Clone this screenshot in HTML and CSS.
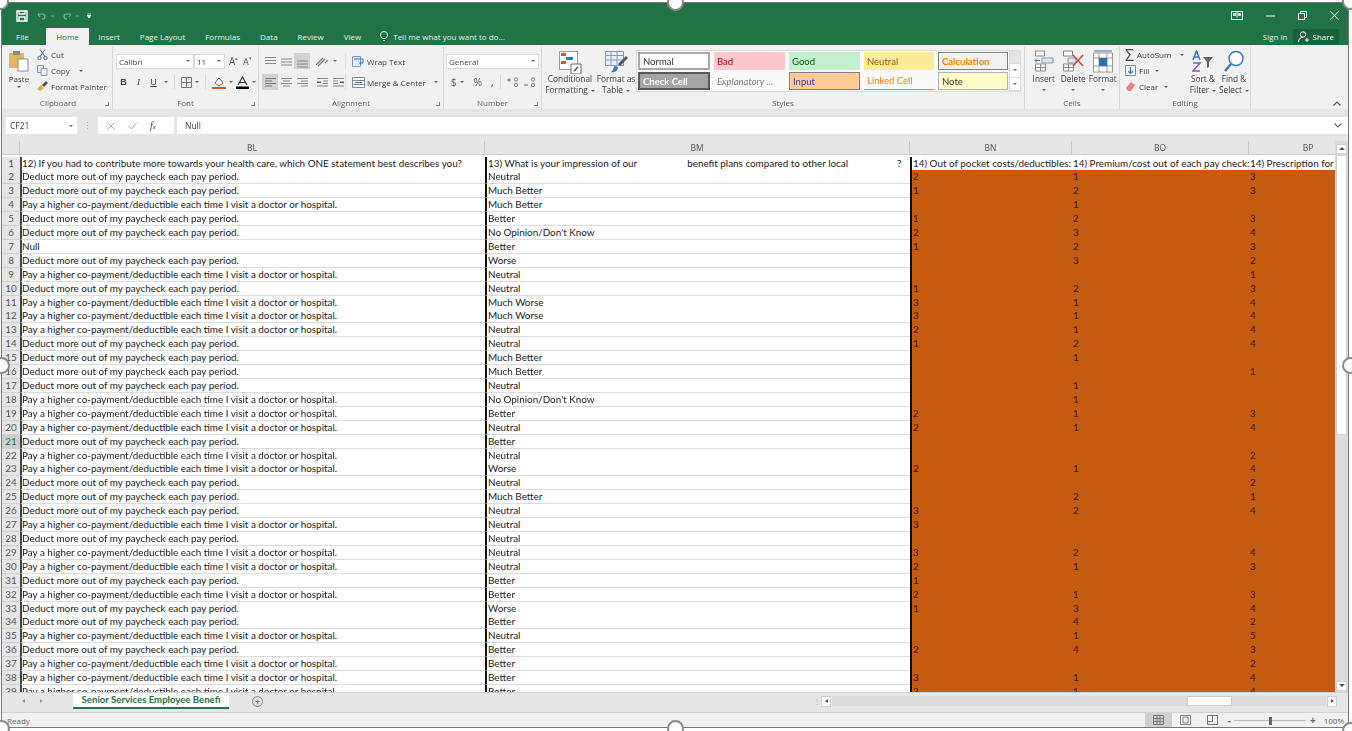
FILE: index.html
```html
<!DOCTYPE html>
<html lang="en">

<head>
    <meta charset="UTF-8">
    <title>Senior Services Employee Benefits - Excel</title>
    <link rel="stylesheet" href="styles.css">
</head>

<body>

    <div class="frame">
        <div class="window">

            <!-- Title bar -->
            <div class="titlebar">
                <div class="qat">
                    <svg class="ic-save" width="12" height="12" viewBox="0 0 12 12"><path d="M1 1h10v10H1z M3 1v3h6V1 M3 11V7h6v4" fill="none" stroke="#fff" stroke-width="1.4"/></svg>
                    <svg class="ic-undo" width="22" height="10" viewBox="0 0 22 10"><path d="M2 3l2 3M2 3h4c4 0 4 5 0 5" fill="none" stroke="#7fae93" stroke-width="1.2"/><path d="M15 5h3" stroke="#7fae93"/></svg>
                    <svg class="ic-redo" width="22" height="10" viewBox="0 0 22 10"><path d="M10 3L8 6M10 3H6c-4 0-4 5 0 5" fill="none" stroke="#7fae93" stroke-width="1.2"/><path d="M15 5h3" stroke="#7fae93"/></svg>
                    <svg class="ic-more" width="6" height="6" viewBox="0 0 6 6"><path d="M1 0h4M1 2h4l-2 3z" stroke="#fff" fill="#fff" stroke-width=".7"/></svg>
                </div>
                <div class="winbtns">
                    <svg width="12" height="9" viewBox="0 0 12 9"><path d="M.5.5h11v8H.5z M6 .5v6" fill="none" stroke="#fff"/><path d="M2 2h3v3H2zM7 2h3v3H7z" fill="#cfe3d7"/></svg>
                    <svg width="9" height="9" viewBox="0 0 9 9"><path d="M0 5h9" stroke="#fff"/></svg>
                    <svg width="9" height="9" viewBox="0 0 9 9"><path d="M.5 2.5h6v6h-6z M2.5 2V.5h6v6H7" fill="none" stroke="#fff"/></svg>
                    <svg width="9" height="9" viewBox="0 0 9 9"><path d="M.5.5l8 8M8.5.5l-8 8" stroke="#fff"/></svg>
                </div>
            </div>

            <div class="tabs">
                <span class="tab tab-file">File</span>
                <span class="tab tab-active">Home</span>
                <span class="tab">Insert</span>
                <span class="tab">Page Layout</span>
                <span class="tab">Formulas</span>
                <span class="tab">Data</span>
                <span class="tab">Review</span>
                <span class="tab">View</span>
                <span class="tell-me">
                    <svg width="8" height="11" viewBox="0 0 8 11"><path d="M2.5 7.5C1 6.5.5 5.3.5 4a3.5 3.5 0 0 1 7 0c0 1.3-.5 2.5-2 3.5zM3 9.5h2" fill="none" stroke="#fff" stroke-width=".9"/></svg>
                    Tell me what you want to do...
                </span>
                <span class="sign-in">Sign in</span>
                <span class="share">
                    <svg width="11" height="11" viewBox="0 0 11 11"><circle cx="5" cy="3.5" r="2.7" fill="none" stroke="#fff"/><path d="M.5 11c0-3 2-4.8 4.500-4.800M7 9h4M9 7v4" fill="none" stroke="#fff"/></svg>
                    Share
                </span>
            </div>

            <!-- Ribbon -->
            <div class="ribbon">

                <div class="group group-clipboard">
                    <div class="group-body">
                        <div class="paste">
                            <svg width="22" height="22" viewBox="0 0 22 22"><path d="M1 3h15v15H1z" fill="#e3b565"/><path d="M5 1h7v4H5z" fill="#8c8c8c"/><path d="M10 9h10v12H10z" fill="#fff" stroke="#8a8a8a"/></svg>
                            <span>Paste</span>
                            <i class="caret"></i>
                        </div>
                        <div class="clip-list">
                            <span class="clip-item"><svg width="11" height="11" viewBox="0 0 11 11"><circle cx="2.500" cy="9" r="1.700" fill="none" stroke="#4a6fa0"/><circle cx="8.500" cy="9" r="1.700" fill="none" stroke="#4a6fa0"/><path d="M3 7.500L8 .5M8 7.500L3 .5" stroke="#555"/></svg>Cut</span>
                            <span class="clip-item"><svg width="11" height="11" viewBox="0 0 11 11"><path d="M.5.5h6v7h-6z" fill="#dfe6ee" stroke="#8a9bb0"/><path d="M4 3.500h6v7H4z" fill="#eef2f6" stroke="#8a9bb0"/></svg>Copy <i class="caret caret-gap"></i></span>
                            <span class="clip-item"><svg width="11" height="11" viewBox="0 0 11 11"><path d="M0 8l4-4 3 3-4 3z" fill="#e3a93c"/><path d="M5 4l4-4 2 2-4 4z" fill="#555"/></svg>Format Painter</span>
                        </div>
                    </div>
                    <div class="group-label">Clipboard<i class="launcher"></i></div>
                </div>

                <div class="group group-font">
                    <div class="group-body stack">
                        <div class="tool-row">
                            <span class="combo combo-font">Calibri<i class="caret"></i></span>
                            <span class="combo combo-size">11<i class="caret"></i></span>
                            <span class="glyph glyph-grow">A<sup>▴</sup></span>
                            <span class="glyph glyph-shrink">A<sup>▾</sup></span>
                        </div>
                        <div class="tool-row row-format">
                            <b class="fmt">B</b>
                            <i class="fmt fmt-italic">I</i>
                            <u class="fmt">U</u><i class="caret"></i>
                            <span class="vsep"></span>
                            <svg width="11" height="11" viewBox="0 0 11 11"><path d="M.5.5h10v10H.5zM5.500.5v10M.5 5.500h10" fill="none" stroke="#777"/></svg><i class="caret"></i>
                            <span class="vsep"></span>
                            <svg width="14" height="13" viewBox="0 0 14 13"><path d="M3 7l4-5 4 5-4 3z" fill="#fff" stroke="#666"/><path d="M0 11h14v2H0z" fill="#d2571d"/></svg><i class="caret"></i>
                            <svg class="font-color" width="13" height="13" viewBox="0 0 13 13"><path d="M2 9L6.500 1 11 9M4 6.500h5" fill="none" stroke="#333" stroke-width="1.200"/><path d="M0 10.500h13V13H0z" fill="#000"/></svg><i class="caret"></i>
                        </div>
                    </div>
                    <div class="group-label">Font<i class="launcher"></i></div>
                </div>

                <div class="group group-align">
                    <div class="group-body stack">
                        <div class="tool-row">
                            <span class="al"><svg width="11" height="9" viewBox="0 0 11 9"><path d="M0 .5h11M0 3.500h11M0 6.500h11" stroke="#888"/></svg></span>
                            <span class="al"><svg width="11" height="9" viewBox="0 0 11 9"><path d="M0 2h11M0 5h11M0 8h11" stroke="#888"/></svg></span>
                            <span class="al al-on"><svg width="11" height="13" viewBox="0 0 11 13"><path d="M0 6h11M0 9h11M0 12h11" stroke="#888"/></svg></span>
                            <span class="al orient"><svg width="15" height="11" viewBox="0 0 15 11"><path d="M1 9l7-7M3 10l7-7M10 7l3-3" stroke="#777" stroke-width="1.200"/></svg><i class="caret"></i></span>
                            <span class="wrap-text"><svg width="13" height="11" viewBox="0 0 13 11"><path d="M.5.5h8v10h-8z" fill="#dfe9f3" stroke="#7f9bbc"/><path d="M2 3h9v4H8M9 5.500L7.500 7 9 8.500" fill="none" stroke="#3d7ab8"/></svg>Wrap Text</span>
                        </div>
                        <div class="tool-row">
                            <span class="al al-on"><svg width="11" height="9" viewBox="0 0 11 9"><path d="M0 .5h11M0 3h7M0 5.500h11M0 8h7" stroke="#777"/></svg></span>
                            <span class="al"><svg width="11" height="9" viewBox="0 0 11 9"><path d="M0 .5h11M2 3h7M0 5.500h11M2 8h7" stroke="#888"/></svg></span>
                            <span class="al"><svg width="11" height="9" viewBox="0 0 11 9"><path d="M0 .5h11M4 3h7M0 5.500h11M4 8h7" stroke="#888"/></svg></span>
                            <span class="al al-indent"><svg width="11" height="9" viewBox="0 0 11 9"><path d="M0 .5h11M6 3h5M6 5.500h5M0 8h11" stroke="#888"/><path d="M0 4.300h4" stroke="#2f6fb3" stroke-width="1.600"/></svg></span>
                            <span class="al"><svg width="11" height="9" viewBox="0 0 11 9"><path d="M0 .5h11M0 3h5M0 5.500h5M0 8h11" stroke="#888"/><path d="M7 4.300h4" stroke="#2f6fb3" stroke-width="1.600"/></svg></span>
                            <span class="wrap-text merge"><svg width="13" height="11" viewBox="0 0 13 11"><path d="M.5.5h12v10H.5zM.5 3.500h12M.5 7.500h12" fill="#fff" stroke="#7f8a96"/><path d="M3 5.500h7" stroke="#3d7ab8"/></svg>Merge &amp; Center <i class="caret caret-gap"></i></span>
                        </div>
                    </div>
                    <div class="group-label">Alignment<i class="launcher"></i></div>
                </div>

                <div class="group group-number">
                    <div class="group-body stack">
                        <div class="tool-row">
                            <span class="combo combo-number">General<i class="caret"></i></span>
                        </div>
                        <div class="tool-row row-number">
                            <span class="num-sym">$</span><i class="caret"></i>
                            <span class="num-sym num-pct">%</span>
                            <span class="num-sym num-comma">,</span>
                            <span class="vsep"></span>
                            <svg width="13" height="11" viewBox="0 0 13 11"><path d="M0 3h4M2 1v4" stroke="#3d7ab8"/><circle cx="9" cy="2.500" r="1.700" fill="none" stroke="#888"/><circle cx="9" cy="8" r="1.700" fill="none" stroke="#888"/></svg>
                            <svg class="gap-l" width="13" height="11" viewBox="0 0 13 11"><path d="M0 8h4" stroke="#3d7ab8"/><circle cx="9" cy="2.500" r="1.700" fill="none" stroke="#888"/><circle cx="9" cy="8" r="1.700" fill="none" stroke="#888"/></svg>
                        </div>
                    </div>
                    <div class="group-label">Number<i class="launcher"></i></div>
                </div>

                <div class="group group-styles">
                    <div class="group-body">
                        <div class="big-btn btn-cond">
                            <svg width="24" height="24" viewBox="0 0 24 24"><path d="M1.500 1.500h18v18h-18z" fill="#fff" stroke="#9a9a9a"/><path d="M3 3h5v3H3zM3 11h5v3H3z" fill="#d2571d"/><path d="M8 7h7v3H8z" fill="#2f78c4"/><path d="M13 14h10v10H13z" fill="#fff" stroke="#666"/><path d="M16 21l4-4" stroke="#444" stroke-width="1.500"/></svg>
                            <span>Conditional<br>Formatting<i class="caret"></i></span>
                        </div>
                        <div class="big-btn btn-table">
                            <svg width="24" height="24" viewBox="0 0 24 24"><path d="M1.500 1.500h18v14h-18zM1.500 5.500h18M1.500 10h18M7 1.500v14M13 1.500v14" fill="#e8eff6" stroke="#8a9bb0"/><path d="M22 6l2 2-8 8-2-2z" fill="#555"/><path d="M7 22c3 1 7-1 7-5l-3-1c-2 1-1 4-4 6z" fill="#2f78c4"/></svg>
                            <span>Format as<br>Table<i class="caret"></i></span>
                        </div>
                        <div class="gallery">
                            <div class="style-grid">
                                <span class="sc sc-normal">Normal</span>
                                <span class="sc sc-bad">Bad</span>
                                <span class="sc sc-good">Good</span>
                                <span class="sc sc-neutral">Neutral</span>
                                <span class="sc sc-calc">Calculation</span>
                                <span class="sc sc-check">Check Cell</span>
                                <span class="sc sc-expl">Explanatory ...</span>
                                <span class="sc sc-input">Input</span>
                                <span class="sc sc-linked">Linked Cell</span>
                                <span class="sc sc-note">Note</span>
                            </div>
                            <div class="gallery-scroll">
                                <span class="gs gs-off"></span>
                                <span class="gs"><i class="caret"></i></span>
                                <span class="gs"><i class="caret"></i></span>
                            </div>
                        </div>
                    </div>
                    <div class="group-label">Styles</div>
                </div>

                <div class="group group-cells">
                    <div class="group-body">
                        <div class="big-btn btn-cell">
                            <svg width="20" height="24" viewBox="0 0 20 24"><path d="M1.500 1h9v5h-9zM1.500 14h10v7h-10zM6.500 14v7M1.500 17.500h10" fill="#fff" stroke="#888"/><path d="M8 8h11v5H8z" fill="#dfe6ee" stroke="#8a9bb0"/><path d="M1 10.500h5M3 8.500l-2 2 2 2" fill="none" stroke="#2f78c4"/></svg>
                            <span>Insert</span><i class="caret"></i>
                        </div>
                        <div class="big-btn btn-cell">
                            <svg width="22" height="24" viewBox="0 0 22 24"><path d="M1.500 1h9v5h-9zM1.500 14h10v7h-10zM6.500 14v7M1.500 17.500h10" fill="#fff" stroke="#888"/><path d="M6 8h8v5H6z" fill="#dfe6ee" stroke="#8a9bb0"/><path d="M11 5l10 11M21 5L11 16" stroke="#d2473a" stroke-width="1.600"/></svg>
                            <span>Delete</span><i class="caret"></i>
                        </div>
                        <div class="big-btn btn-cell">
                            <svg width="22" height="24" viewBox="0 0 22 24"><path d="M1.500 3h19v19h-19zM1.500 8h19M7 3v19M15 3v19M1.500 16h19" fill="#fff" stroke="#999"/><path d="M7 8h8v8H7z" fill="#2f6fa8"/><path d="M2 1h18" stroke="#2f78c4"/></svg>
                            <span>Format</span><i class="caret"></i>
                        </div>
                    </div>
                    <div class="group-label">Cells</div>
                </div>

                <div class="group group-edit">
                    <div class="group-body">
                        <div class="clip-list edit-list">
                            <span class="clip-item"><b class="sigma">Σ</b>AutoSum <i class="caret caret-gap"></i></span>
                            <span class="clip-item"><svg width="11" height="11" viewBox="0 0 11 11"><path d="M.5.5h10v10H.5z" fill="#fff" stroke="#7f8a96"/><path d="M5.500 2v6M3 6l2.500 2.500L8 6" fill="none" stroke="#2f78c4" stroke-width="1.200"/></svg>Fill<i class="caret"></i></span>
                            <span class="clip-item"><svg width="11" height="11" viewBox="0 0 11 11"><path d="M1 7l5-6 4 3-4 6H3z" fill="#e8837e"/></svg>Clear<i class="caret"></i></span>
                        </div>
                        <div class="big-btn btn-sort">
                            <svg width="22" height="24" viewBox="0 0 22 24"><path d="M11 7h10l-4 5v5l-2 1v-6z" fill="#666"/><path d="M1 10L4.500 1 8 10M2.500 7h4" fill="none" stroke="#2f78c4" stroke-width="1.500"/><path d="M1 13h7l-7 8h7" fill="none" stroke="#8e55b8" stroke-width="1.500"/></svg>
                            <span>Sort &amp;<br>Filter<i class="caret"></i></span>
                        </div>
                        <div class="big-btn btn-find">
                            <svg width="22" height="24" viewBox="0 0 22 24"><circle cx="13" cy="8.500" r="7" fill="#fff" stroke="#2f78c4" stroke-width="1.500"/><path d="M8 14l-6 7" stroke="#2f78c4" stroke-width="2.400"/></svg>
                            <span>Find &amp;<br>Select<i class="caret"></i></span>
                        </div>
                    </div>
                    <div class="group-label">Editing</div>
                </div>

                <svg class="collapse" width="8" height="5" viewBox="0 0 8 5"><path d="M.5 4.500L4 1l3.500 3.500" fill="none" stroke="#555" stroke-width="1.100"/></svg>
            </div>

            <!-- Formula bar -->
            <div class="formula-bar">
                <span class="name-box">CF21<i class="caret"></i></span>
                <span class="fb-dots">⋮</span>
                <span class="fb-btns">
                    <svg width="8" height="8" viewBox="0 0 8 8"><path d="M.5.5l7 7M7.500.5l-7 7" stroke="#aaa"/></svg>
                    <svg width="9" height="8" viewBox="0 0 9 8"><path d="M.5 4l3 3 5-6.500" fill="none" stroke="#aaa"/></svg>
                    <em>f<small>x</small></em>
                </span>
                <span class="fb-input">Null</span>
                <svg class="fb-expand" width="8" height="5" viewBox="0 0 8 5"><path d="M.5.5L4 4 7.500.5" fill="none" stroke="#666" stroke-width="1.100"/></svg>
            </div>

            <!-- Sheet -->
            <div class="sheet">
                <div class="sheet-main">
                    <div class="col-head">
                        <span class="corner"></span>
                        <span>BL</span>
                        <span>BM</span>
                        <span>BN</span>
                        <span>BO</span>
                        <span class="head-bp">BP</span>
                    </div>
                    <div class="rows">
                        <div class="row row-top"><span class="rn">1</span><span class="c bl">12) If you had to contribute more towards your health care, which ONE statement best describes you?</span><span class="c bm"><span>13) What is your impression of our</span><span class="q-b">benefit plans compared to other local</span><span class="q-c">?</span></span><span class="c bn">14) Out of pocket costs/deductibles:</span><span class="c">14) Premium/cost out of each pay check:</span><span class="c">14) Prescription for</span></div>
                        <div class="row"><span class="rn">2</span><span class="c bl">Deduct more out of my paycheck each pay period.</span><span class="c bm">Neutral</span><span class="c bn">2</span><span class="c">1</span><span class="c">3</span></div>
                        <div class="row"><span class="rn">3</span><span class="c bl">Deduct more out of my paycheck each pay period.</span><span class="c bm">Much Better</span><span class="c bn">1</span><span class="c">2</span><span class="c">3</span></div>
                        <div class="row"><span class="rn">4</span><span class="c bl">Pay a higher co-payment/deductible each time I visit a doctor or hospital.</span><span class="c bm">Much Better</span><span class="c bn"></span><span class="c">1</span><span class="c"></span></div>
                        <div class="row"><span class="rn">5</span><span class="c bl">Deduct more out of my paycheck each pay period.</span><span class="c bm">Better</span><span class="c bn">1</span><span class="c">2</span><span class="c">3</span></div>
                        <div class="row"><span class="rn">6</span><span class="c bl">Deduct more out of my paycheck each pay period.</span><span class="c bm">No Opinion/Don't Know</span><span class="c bn">2</span><span class="c">3</span><span class="c">4</span></div>
                        <div class="row"><span class="rn">7</span><span class="c bl">Null</span><span class="c bm">Better</span><span class="c bn">1</span><span class="c">2</span><span class="c">3</span></div>
                        <div class="row"><span class="rn">8</span><span class="c bl">Deduct more out of my paycheck each pay period.</span><span class="c bm">Worse</span><span class="c bn"></span><span class="c">3</span><span class="c">2</span></div>
                        <div class="row"><span class="rn">9</span><span class="c bl">Pay a higher co-payment/deductible each time I visit a doctor or hospital.</span><span class="c bm">Neutral</span><span class="c bn"></span><span class="c"></span><span class="c">1</span></div>
                        <div class="row"><span class="rn">10</span><span class="c bl">Deduct more out of my paycheck each pay period.</span><span class="c bm">Neutral</span><span class="c bn">1</span><span class="c">2</span><span class="c">3</span></div>
                        <div class="row"><span class="rn">11</span><span class="c bl">Pay a higher co-payment/deductible each time I visit a doctor or hospital.</span><span class="c bm">Much Worse</span><span class="c bn">3</span><span class="c">1</span><span class="c">4</span></div>
                        <div class="row"><span class="rn">12</span><span class="c bl">Pay a higher co-payment/deductible each time I visit a doctor or hospital.</span><span class="c bm">Much Worse</span><span class="c bn">3</span><span class="c">1</span><span class="c">4</span></div>
                        <div class="row"><span class="rn">13</span><span class="c bl">Pay a higher co-payment/deductible each time I visit a doctor or hospital.</span><span class="c bm">Neutral</span><span class="c bn">2</span><span class="c">1</span><span class="c">4</span></div>
                        <div class="row"><span class="rn">14</span><span class="c bl">Deduct more out of my paycheck each pay period.</span><span class="c bm">Neutral</span><span class="c bn">1</span><span class="c">2</span><span class="c">4</span></div>
                        <div class="row"><span class="rn">15</span><span class="c bl">Deduct more out of my paycheck each pay period.</span><span class="c bm">Much Better</span><span class="c bn"></span><span class="c">1</span><span class="c"></span></div>
                        <div class="row"><span class="rn">16</span><span class="c bl">Deduct more out of my paycheck each pay period.</span><span class="c bm">Much Better</span><span class="c bn"></span><span class="c"></span><span class="c">1</span></div>
                        <div class="row"><span class="rn">17</span><span class="c bl">Deduct more out of my paycheck each pay period.</span><span class="c bm">Neutral</span><span class="c bn"></span><span class="c">1</span><span class="c"></span></div>
                        <div class="row"><span class="rn">18</span><span class="c bl">Pay a higher co-payment/deductible each time I visit a doctor or hospital.</span><span class="c bm">No Opinion/Don't Know</span><span class="c bn"></span><span class="c">1</span><span class="c"></span></div>
                        <div class="row"><span class="rn">19</span><span class="c bl">Pay a higher co-payment/deductible each time I visit a doctor or hospital.</span><span class="c bm">Better</span><span class="c bn">2</span><span class="c">1</span><span class="c">3</span></div>
                        <div class="row"><span class="rn">20</span><span class="c bl">Pay a higher co-payment/deductible each time I visit a doctor or hospital.</span><span class="c bm">Neutral</span><span class="c bn">2</span><span class="c">1</span><span class="c">4</span></div>
                        <div class="row row-sel"><span class="rn">21</span><span class="c bl">Deduct more out of my paycheck each pay period.</span><span class="c bm">Better</span><span class="c bn"></span><span class="c"></span><span class="c"></span></div>
                        <div class="row"><span class="rn">22</span><span class="c bl">Pay a higher co-payment/deductible each time I visit a doctor or hospital.</span><span class="c bm">Neutral</span><span class="c bn"></span><span class="c"></span><span class="c">2</span></div>
                        <div class="row"><span class="rn">23</span><span class="c bl">Pay a higher co-payment/deductible each time I visit a doctor or hospital.</span><span class="c bm">Worse</span><span class="c bn">2</span><span class="c">1</span><span class="c">4</span></div>
                        <div class="row"><span class="rn">24</span><span class="c bl">Deduct more out of my paycheck each pay period.</span><span class="c bm">Neutral</span><span class="c bn"></span><span class="c"></span><span class="c">2</span></div>
                        <div class="row"><span class="rn">25</span><span class="c bl">Deduct more out of my paycheck each pay period.</span><span class="c bm">Much Better</span><span class="c bn"></span><span class="c">2</span><span class="c">1</span></div>
                        <div class="row"><span class="rn">26</span><span class="c bl">Deduct more out of my paycheck each pay period.</span><span class="c bm">Neutral</span><span class="c bn">3</span><span class="c">2</span><span class="c">4</span></div>
                        <div class="row"><span class="rn">27</span><span class="c bl">Pay a higher co-payment/deductible each time I visit a doctor or hospital.</span><span class="c bm">Neutral</span><span class="c bn">3</span><span class="c"></span><span class="c"></span></div>
                        <div class="row"><span class="rn">28</span><span class="c bl">Deduct more out of my paycheck each pay period.</span><span class="c bm">Neutral</span><span class="c bn"></span><span class="c"></span><span class="c"></span></div>
                        <div class="row"><span class="rn">29</span><span class="c bl">Pay a higher co-payment/deductible each time I visit a doctor or hospital.</span><span class="c bm">Neutral</span><span class="c bn">3</span><span class="c">2</span><span class="c">4</span></div>
                        <div class="row"><span class="rn">30</span><span class="c bl">Pay a higher co-payment/deductible each time I visit a doctor or hospital.</span><span class="c bm">Neutral</span><span class="c bn">2</span><span class="c">1</span><span class="c">3</span></div>
                        <div class="row"><span class="rn">31</span><span class="c bl">Deduct more out of my paycheck each pay period.</span><span class="c bm">Better</span><span class="c bn">1</span><span class="c"></span><span class="c"></span></div>
                        <div class="row"><span class="rn">32</span><span class="c bl">Pay a higher co-payment/deductible each time I visit a doctor or hospital.</span><span class="c bm">Better</span><span class="c bn">2</span><span class="c">1</span><span class="c">3</span></div>
                        <div class="row"><span class="rn">33</span><span class="c bl">Deduct more out of my paycheck each pay period.</span><span class="c bm">Worse</span><span class="c bn">1</span><span class="c">3</span><span class="c">4</span></div>
                        <div class="row"><span class="rn">34</span><span class="c bl">Deduct more out of my paycheck each pay period.</span><span class="c bm">Better</span><span class="c bn"></span><span class="c">4</span><span class="c">2</span></div>
                        <div class="row"><span class="rn">35</span><span class="c bl">Pay a higher co-payment/deductible each time I visit a doctor or hospital.</span><span class="c bm">Neutral</span><span class="c bn"></span><span class="c">1</span><span class="c">5</span></div>
                        <div class="row"><span class="rn">36</span><span class="c bl">Deduct more out of my paycheck each pay period.</span><span class="c bm">Better</span><span class="c bn">2</span><span class="c">4</span><span class="c">3</span></div>
                        <div class="row"><span class="rn">37</span><span class="c bl">Pay a higher co-payment/deductible each time I visit a doctor or hospital.</span><span class="c bm">Better</span><span class="c bn"></span><span class="c"></span><span class="c">2</span></div>
                        <div class="row"><span class="rn">38</span><span class="c bl">Pay a higher co-payment/deductible each time I visit a doctor or hospital.</span><span class="c bm">Better</span><span class="c bn">3</span><span class="c">1</span><span class="c">4</span></div>
                        <div class="row"><span class="rn">39</span><span class="c bl">Pay a higher co-payment/deductible each time I visit a doctor or hospital.</span><span class="c bm">Better</span><span class="c bn">3</span><span class="c">1</span><span class="c">4</span></div>
                    </div>
                </div>
                <div class="vscroll">
                    <span class="sb-btn sb-up"></span>
                    <span class="sb-thumb"></span>
                    <span class="sb-btn sb-down"></span>
                </div>
            </div>

            <!-- Sheet tabs -->
            <div class="tabbar">
                <span class="nav-arrows"><i class="arrow-l"></i><i class="arrow-r"></i></span>
                <span class="sheet-tab">Senior Services Employee Benefi</span>
                <span class="add-sheet">+</span>
                <span class="hscroll-dots">⋮</span>
                <span class="hscroll">
                    <span class="hs-btn"><i class="arrow-l"></i></span>
                    <span class="hs-track"><span class="hs-thumb"></span></span>
                    <span class="hs-btn"><i class="arrow-r"></i></span>
                </span>
            </div>

            <!-- Status bar -->
            <div class="statusbar">
                <span class="ready">Ready</span>
                <span class="views">
                    <span class="view view-on"><svg width="11" height="10" viewBox="0 0 11 10"><path d="M.5.5h10v9H.5zM.5 3.500h10M.5 6.500h10M4 .5v9M7 .5v9" fill="none" stroke="#777"/></svg></span>
                    <span class="view"><svg width="11" height="10" viewBox="0 0 11 10"><path d="M.5.5h10v9H.5zM3 2h5v6H3z" fill="none" stroke="#888"/></svg></span>
                    <span class="view"><svg width="11" height="10" viewBox="0 0 11 10"><path d="M.5.5h10v9H.5zM.5 6.500h5v-6" fill="none" stroke="#777"/></svg></span>
                </span>
                <span class="zoom-minus">-</span>
                <span class="slider"><i class="slider-knob"></i></span>
                <span class="zoom-plus">+</span>
                <span class="zoom-pct">100%</span>
            </div>
        </div>

        <!-- Picture selection handles -->
        <span class="handle h-tl"></span>
        <span class="handle h-tc"></span>
        <span class="handle h-tr"></span>
        <span class="handle h-ml"></span>
        <span class="handle h-mr"></span>
        <span class="handle h-bl"></span>
        <span class="handle h-bc"></span>
        <span class="handle h-br"></span>
    </div>

</body>

</html>
```

FILE: styles.css
```css
* {
    box-sizing: border-box;
}

html,
body {
    margin: 0;
    padding: 0;
    height: 731px;
    overflow: hidden;
    background: #fff;
}

body {
    font-family: "Open Sans", "Noto Sans", sans-serif;
    font-size: 8px;
    color: #444;
}

svg {
    display: block;
    flex: none;
}

.frame {
    position: relative;
    width: 1352px;
    height: 731px;
    padding: 3px 4px 4px 2px;
}

.window {
    display: flex;
    flex-direction: column;
    width: 1346px;
    height: 724px;
    background: #e6e6e6;
    box-shadow: 0 0 0 1px #777;
    filter: blur(0.35px);
}

/* caret used all over the ribbon */
.caret {
    display: inline-block;
    flex: none;
    width: 0;
    height: 0;
    margin-left: 3px;
    border-left: 2px solid transparent;
    border-right: 2px solid transparent;
    border-top: 2px solid #666;
    vertical-align: middle;
}

.caret-gap {
    margin-left: 6px;
}

/* Title bar */
.titlebar {
    display: flex;
    justify-content: space-between;
    align-items: center;
    height: 25px;
    flex: none;
    padding: 0 9px 0 14px;
    background: #217346;
}

.qat,
.winbtns {
    display: flex;
    align-items: center;
}

.ic-undo {
    margin-left: 8px;
}

.ic-redo {
    margin-left: 3px;
}

.ic-more {
    margin-left: 3px;
}

.winbtns {
    gap: 23px;
}

.tabs {
    display: flex;
    align-items: center;
    flex: none;
    height: 17px;
    padding-left: 14px;
    color: #e8f1ec;
    background: #217346;
}

.tab {
    margin-right: 20px;
}

.tab-file {
    margin-right: 17px;
}

.tab-active {
    display: flex;
    align-items: center;
    height: 17px;
    margin-right: 9px;
    padding: 0 10.5px;
    color: #217346;
    background: #f1f1f1;
}

.tell-me {
    display: flex;
    align-items: center;
    gap: 5px;
    margin-left: -1px;
}

.sign-in {
    margin-left: auto;
}

.share {
    display: flex;
    align-items: center;
    gap: 4px;
    height: 15px;
    margin: 0 9px 0 5px;
    padding: 0 5px;
    background: #1d5f3b;
    color: #fff;
}

/* Ribbon */
.ribbon {
    position: relative;
    display: flex;
    flex: none;
    height: 64px;
    padding-left: 2px;
    background: #f1f1f1;
}

.group {
    display: flex;
    flex-direction: column;
    flex: none;
    height: 62px;
    margin-top: 2px;
    border-right: 1px solid #d8d8d8;
}

.group-clipboard {
    width: 109px;
}

.group-font {
    width: 146px;
}

.group-align {
    width: 185px;
}

.group-number {
    width: 98px;
}

.group-styles {
    width: 483px;
}

.group-cells {
    width: 95px;
}

.group-edit {
    width: 131px;
}

.group-body {
    display: flex;
    flex: 1;
    min-height: 0;
}

.stack {
    flex-direction: column;
    gap: 5px;
    padding-top: 6px;
}

.group-label {
    position: relative;
    flex: none;
    height: 12px;
    line-height: 12px;
    text-align: center;
    color: #666;
    font-size: 8px;
}

.launcher {
    position: absolute;
    right: 3px;
    bottom: 3px;
    width: 4px;
    height: 4px;
    border-right: 1px solid #888;
    border-bottom: 1px solid #888;
}

.tool-row {
    display: flex;
    align-items: center;
    height: 16px;
}

.paste {
    display: flex;
    flex-direction: column;
    align-items: center;
    width: 28px;
    margin-left: 1px;
    padding-top: 3px;
}

.paste span {
    margin-top: 1px;
}

.paste .caret {
    margin: 2px 0 0;
}

.clip-list {
    display: flex;
    flex-direction: column;
    gap: 3px;
    padding: 1px 0 0 4px;
}

.clip-item {
    display: flex;
    align-items: center;
    gap: 3px;
    height: 13px;
    white-space: nowrap;
}

.group-font .tool-row {
    padding-left: 3px;
}

.combo {
    display: flex;
    align-items: center;
    justify-content: space-between;
    height: 15px;
    padding: 0 3px 0 2px;
    background: #fff;
    border: 1px solid #dcdcdc;
    font-size: 8px;
}

.combo-font {
    width: 78px;
}

.combo-size {
    width: 31px;
}

.glyph {
    margin-left: 4px;
    font-size: 10px;
    color: #555;
}

.glyph sup {
    font-size: 5px;
    color: #2f78c4;
    vertical-align: 5px;
    line-height: 0;
}

.glyph-shrink {
    font-size: 8.5px;
    margin-left: 5px;
}

.fmt {
    width: 15px;
    text-align: center;
    font-size: 9px;
    font-family: "Liberation Sans", sans-serif;
    color: #444;
}

.fmt-italic {
    font-family: "Liberation Serif", serif;
}

.row-format {
    padding-left: 3px !important;
}

.vsep {
    width: 1px;
    height: 14px;
    margin: 0 6px;
    background: #d8d8d8;
}

.gap-l {
    margin-left: 4px;
}

.font-color {
    margin-left: 3px;
}

.group-align .tool-row {
    padding-left: 3px;
}

.al {
    display: flex;
    align-items: center;
    justify-content: center;
    width: 16px;
    height: 16px;
}

.al-on {
    background: #d2d2d2;
}

.orient {
    width: 26px;
    margin-left: 3px;
}

.al-indent {
    margin-left: 4px;
}

.wrap-text {
    display: flex;
    align-items: center;
    gap: 2px;
    margin-left: 6px;
    padding-left: 6px;
    border-left: 1px solid #dedede;
    height: 16px;
    white-space: nowrap;
}

.merge {
    margin-left: -1px;
}

.group-number .tool-row {
    padding-left: 2px;
}

.combo-number {
    width: 93px;
}

.row-number {
    padding-left: 7px !important;
}

.num-sym {
    font-size: 10px;
    color: #555;
}

.num-pct {
    margin-left: 10px;
}

.num-comma {
    margin-left: 9px;
}

.big-btn {
    display: flex;
    flex-direction: column;
    align-items: center;
    flex: none;
    padding-top: 3px;
    text-align: center;
    line-height: 11px;
    font-size: 8.3px;
    white-space: nowrap;
}

.big-btn span {
    margin-top: -1px;
}

.btn-cond {
    width: 50px;
    margin-left: 3px;
}

.btn-table {
    width: 42px;
}

.gallery {
    display: flex;
    width: 385px;
    height: 42px;
    margin: 3px 0 0 -1px;
    background: #fafafa;
    border: 1px solid #dcdcdc;
}

.style-grid {
    display: grid;
    grid-template-columns: 72px 71px 71px 70px 70px;
    grid-auto-rows: 18px;
    gap: 2px 4px;
    padding: 1px 0 0 1px;
    width: 372px;
}

.sc {
    display: flex;
    align-items: center;
    padding-left: 3px;
    font-family: Lato, sans-serif;
    font-size: 9.5px;
    color: #333;
    overflow: hidden;
    white-space: nowrap;
}

.sc-normal {
    background: #fff;
    border: 2px solid #a8a8a8;
}

.sc-bad {
    background: #ffc7ce;
    color: #9c0006;
}

.sc-good {
    background: #c6efce;
    color: #006100;
}

.sc-neutral {
    background: #ffeb9c;
    color: #9c5700;
}

.sc-calc {
    background: #f2f2f2;
    border: 1px solid #7f7f7f;
    color: #fa7d00;
    font-weight: 700;
}

.sc-check {
    background: #a5a5a5;
    border: 2px solid #5a5a5a;
    color: #fff;
    font-weight: 700;
}

.sc-expl {
    color: #7f7f7f;
    font-style: italic;
}

.sc-input {
    background: #ffcc99;
    border: 1px solid #7f7f7f;
    color: #3f3f76;
}

.sc-linked {
    color: #fa7d00;
    border-bottom: 1px solid #fa7d00;
}

.sc-note {
    background: #ffffcc;
    border: 1px solid #b2b2b2;
}

.gallery-scroll {
    display: flex;
    flex-direction: column;
    width: 11px;
    margin-left: auto;
}

.gs {
    display: flex;
    flex: 1;
    align-items: center;
    justify-content: center;
    background: #fff;
    border-left: 1px solid #dcdcdc;
    border-bottom: 1px solid #dcdcdc;
}

.gs .caret {
    margin: 0;
}

.gs-off {
    background: #e4e4e4;
}

.btn-cell {
    width: 29.5px;
}

.btn-cell .caret {
    margin: 5px 0 0;
}

.group-cells .group-body {
    padding-left: 4px;
    gap: 0;
}

.edit-list {
    width: 67px;
    padding-left: 5px;
}

.sigma {
    font-size: 16px;
    line-height: 10px;
    font-weight: 400;
    color: #444;
}

.btn-sort {
    width: 32px;
}

.btn-find {
    width: 30px;
}

.collapse {
    position: absolute;
    right: 7px;
    bottom: 3px;
}

/* Formula bar */
.formula-bar {
    display: flex;
    align-items: center;
    flex: none;
    height: 32px;
    padding: 8px 0 7px 4px;
    background: #e6e6e6;
    font-size: 8.5px;
}

.name-box {
    display: flex;
    align-items: center;
    justify-content: space-between;
    width: 71px;
    height: 17px;
    padding: 0 4px;
    background: #fff;
}

.fb-dots {
    width: 21px;
    text-align: center;
    color: #aaa;
}

.fb-btns {
    display: flex;
    align-items: center;
    gap: 13px;
    width: 76px;
    height: 17px;
    padding-left: 9px;
    background: #fff;
}

.fb-btns em {
    font-family: "Liberation Serif", serif;
    font-size: 10px;
    color: #444;
}

.fb-btns small {
    font-size: 7px;
}

.fb-input {
    display: flex;
    align-items: center;
    flex: 1;
    height: 17px;
    margin-left: 3px;
    padding-left: 8px;
    background: #fff;
}

.fb-expand {
    position: absolute;
    right: 6px;
}

/* Sheet */
.sheet {
    display: flex;
    flex: none;
    height: 551px;
}

.sheet-main {
    display: flex;
    flex-direction: column;
    width: 1333px;
}

.col-head,
.row {
    display: grid;
    grid-template-columns: 18px 465px 425px 162px 177px 86px;
}

.col-head {
    flex: none;
    height: 14px;
    line-height: 14px;
    text-align: center;
    color: #555;
    background: #e6e6e6;
    border-bottom: 1px solid #cfcfcf;
    font-size: 8.5px;
}

.col-head span {
    border-right: 1px solid #c9c9c9;
}

.col-head .head-bp {
    padding-left: 32px;
    border-right: 0;
}

.rows {
    flex: 1;
    min-height: 0;
    padding-top: 1.5px;
    overflow: hidden;
    background: #fff;
}

.row {
    height: 13.92px;
    line-height: 13px;
    font-family: Lato, sans-serif;
    font-size: 9.9px;
    color: #222;
}

.rn {
    text-align: center;
    color: #555;
    background: #e6e6e6;
    border-bottom: 1px solid #d0d0d0;
}

.row-sel .rn {
    color: #217346;
    background: #cfcfcf;
}

.c {
    padding-left: 1px;
    overflow: hidden;
    white-space: nowrap;
    background: #c55a11;
    color: #3a1802;
}

.bl,
.bm {
    background: #fff;
    color: #222;
    border-bottom: 1px solid #dcdcdc;
}

.bl {
    padding-left: 0;
    border-left: 2px solid #444;
}

.bm {
    padding-left: 1px;
    border-left: 2px solid #111;
}

.bn {
    padding-left: 1px;
    border-left: 2px solid #111;
}

.row-top .c {
    display: block;
    background: #fff;
    color: #222;
}

.row-top .bm {
    display: flex;
}

.q-b {
    margin-left: 50px;
}

.q-c {
    margin-left: 49px;
}

.vscroll {
    display: flex;
    flex-direction: column;
    align-items: center;
    width: 13px;
    padding-top: 3px;
    background: #dcdcdc;
}

.sb-btn {
    position: relative;
    flex: none;
    width: 11px;
    height: 10px;
    background: #fff;
    border: 1px solid #cfcfcf;
}

.sb-btn::after {
    content: "";
    position: absolute;
    left: 2px;
    top: 2px;
    border-left: 3px solid transparent;
    border-right: 3px solid transparent;
    border-bottom: 3px solid #555;
}

.sb-down {
    margin-top: auto;
    margin-bottom: 1px;
}

.sb-down::after {
    border-bottom: 0;
    border-top: 3px solid #555;
}

.sb-thumb {
    width: 11px;
    height: 280px;
    margin-top: 1px;
    background: #fff;
    border: 1px solid #cfcfcf;
}

/* Sheet tabs */
.tabbar {
    display: flex;
    align-items: flex-start;
    flex: none;
    height: 20px;
    background: #e6e6e6;
    border-top: 1px solid #cfcfcf;
}

.nav-arrows {
    display: flex;
    align-items: center;
    gap: 15px;
    width: 71px;
    height: 16px;
    padding-left: 20px;
}

.arrow-l,
.arrow-r {
    display: block;
    width: 0;
    height: 0;
    border-top: 2px solid transparent;
    border-bottom: 2px solid transparent;
}

.arrow-l {
    border-right: 3px solid #999;
}

.arrow-r {
    border-left: 3px solid #999;
}

.sheet-tab {
    height: 16px;
    width: 156px;
    line-height: 14px;
    text-align: center;
    font-family: Lato, sans-serif;
    font-size: 9.6px;
    font-weight: 700;
    color: #217346;
    background: #fff;
    border-bottom: 2px solid #217346;
    white-space: nowrap;
}

.add-sheet {
    width: 11px;
    height: 11px;
    margin: 3px 0 0 23px;
    line-height: 9px;
    text-align: center;
    font-weight: 700;
    color: #666;
    border: 1px solid #888;
    border-radius: 50%;
}

.hscroll-dots {
    margin: 2px 0 0 550px;
    color: #aaa;
}

.hscroll {
    display: flex;
    align-items: center;
    gap: 1px;
    position: absolute;
    left: 819px;
    width: 516px;
    height: 16px;
}

.hs-btn {
    display: flex;
    align-items: center;
    justify-content: center;
    flex: none;
    width: 10px;
    height: 11px;
    background: #fff;
    border: 1px solid #cfcfcf;
}

.hs-btn .arrow-l {
    border-right-color: #555;
}

.hs-btn .arrow-r {
    border-left-color: #555;
}

.hs-track {
    display: flex;
    justify-content: flex-end;
    flex: 1;
    height: 10px;
    padding-right: 94px;
    background: #dcdcdc;
}

.hs-thumb {
    width: 45px;
    background: #fff;
    border: 1px solid #cfcfcf;
}

/* Status bar */
.statusbar {
    display: flex;
    align-items: center;
    flex: 1;
    min-height: 0;
    padding-right: 4px;
    background: #f1f1f1;
    border-top: 1px solid #d4d4d4;
    color: #666;
}

.ready {
    margin-left: 5px;
}

.views {
    display: flex;
    margin-left: auto;
}

.view {
    display: flex;
    align-items: center;
    justify-content: center;
    width: 27px;
    height: 14px;
}

.view-on {
    background: #cfcfcf;
}

.zoom-minus {
    margin-left: 2px;
    font-weight: 700;
    font-size: 10px;
}

.slider {
    position: relative;
    width: 72px;
    height: 1px;
    margin: 0 4px 0 3px;
    background: #bcbcbc;
}

.slider-knob {
    position: absolute;
    left: 35px;
    top: -3px;
    width: 3px;
    height: 8px;
    background: #666;
}

.zoom-plus {
    font-weight: 700;
    font-size: 10px;
}

.zoom-pct {
    margin-left: 8px;
    font-size: 8px;
}

/* Picture handles */
.handle {
    position: absolute;
    width: 17px;
    height: 17px;
    background: #fff;
    border: 2.5px solid #8a8a8a;
    border-radius: 50%;
}

.h-tl {
    left: -8px;
    top: -7px;
}

.h-tc {
    left: 667px;
    top: -6px;
}

.h-tr {
    left: 1342px;
    top: -7px;
}

.h-ml {
    left: -7px;
    top: 357px;
}

.h-mr {
    left: 1342px;
    top: 357px;
}

.h-bl {
    left: -7px;
    top: 720px;
}

.h-bc {
    left: 667px;
    top: 720px;
}

.h-br {
    left: 1342px;
    top: 722px;
}
```
